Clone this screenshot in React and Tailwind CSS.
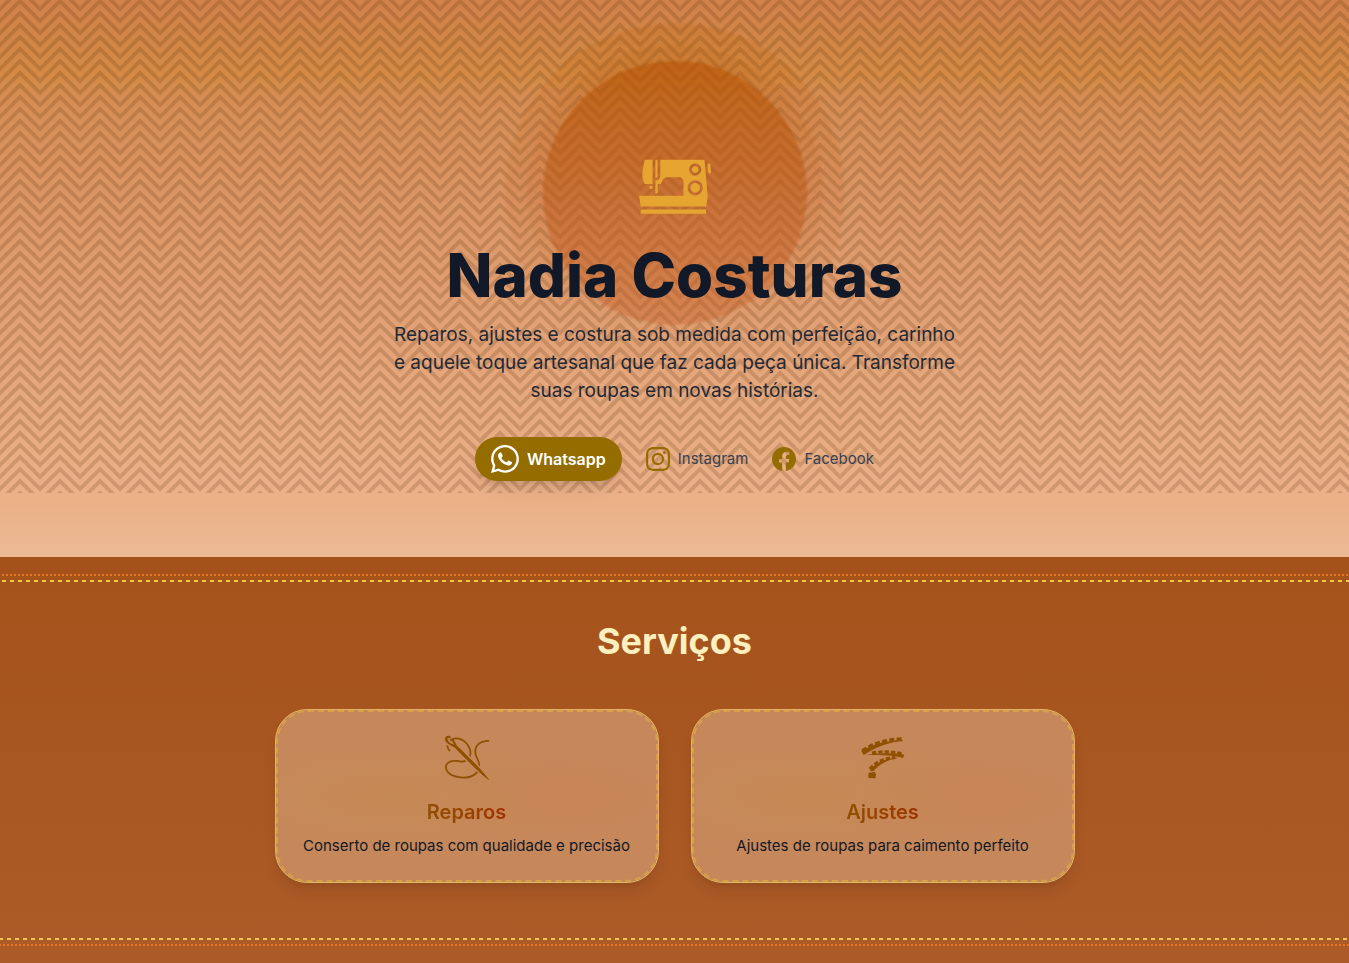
import { GiSewingMachine, GiSewingNeedle } from "react-icons/gi";
import { BsFacebook, BsInstagram, BsWhatsapp } from "react-icons/bs";

function TapeMeasure({ className }) {
  return (
    <svg viewBox="25 27 144 144" className={className} fill="none" stroke="currentColor" aria-hidden="true">
      <path d="M32 77L44 71C75 55 110 47 152 45L159 48C120 51 78 63 39 91Z" fill="currentColor" stroke="none" />
      <path d="M35 77C65 55 105 43 155 41" strokeWidth="9" strokeDasharray="15 7" />
      <path d="M47 90C75 84 120 82 161 89L157 99C122 89 80 90 47 90Z" fill="currentColor" stroke="none" />
      <path d="M64 84C96 78 128 80 158 87" strokeWidth="9" strokeDasharray="13 6" />
      <path d="M146 98C110 103 87 117 68 139L57 137C76 113 102 98 146 98Z" fill="currentColor" stroke="none" />
      <path d="M58 132C75 112 98 101 134 97" strokeWidth="10" strokeDasharray="13 6" />
      <path d="M54 143L72 141L76 148L74 160L53 159Z" fill="currentColor" stroke="none" />
    </svg>
  );
}

function ZigZag() {
  return (
    <svg className="absolute inset-0 size-full text-[#502800]/18" aria-hidden="true">
      <defs>
        <pattern id="zigzag" width="40" height="12" patternUnits="userSpaceOnUse">
          <path
            fill="currentColor"
            d="M0 6.172L6.172 0h5.656L0 11.828V6.172zm40 5.656L28.172 0h5.656L40 6.172v5.656zM6.172 12l12-12h3.656l12 12h-5.656L20 3.828 11.828 12H6.172zm12 0L20 10.172 21.828 12h-3.656z"
          />
        </pattern>
      </defs>
      <rect width="100%" height="100%" fill="url(#zigzag)" />
    </svg>
  );
}

function Halo() {
  return (
    <div className="absolute top-1/2 left-1/2 grid -translate-1/2 place-items-center" aria-hidden="true">
      <div className="col-start-1 row-start-1 size-85 rounded-full bg-linear-to-b from-[#c2640c]/20 via-[#c05a18]/10 to-transparent blur-[1px]" />
      <div className="col-start-1 row-start-1 size-74 rounded-full bg-linear-to-b from-[#b8600c]/15 via-[#c05a18]/10 to-transparent blur-[1px]" />
      <div className="col-start-1 row-start-1 size-66 rounded-full bg-linear-to-b from-[#b45000]/55 via-[#ba5410]/45 to-[#c8602a]/40 blur-[1px]" />
    </div>
  );
}

function StitchTop() {
  return (
    <div className="flex flex-col gap-1 pt-[17px]" aria-hidden="true">
      <div className="h-[2px] bg-[repeating-linear-gradient(to_right,transparent_0_2px,#e8741f_2px_4px)]" />
      <div className="h-[2px] bg-[repeating-linear-gradient(to_right,transparent_0_2px,#ecc94b_2px_6px,transparent_6px_8px)]" />
    </div>
  );
}

function StitchBottom() {
  return (
    <div className="flex flex-col gap-1 pb-[18px]" aria-hidden="true">
      <div className="h-[2px] bg-[repeating-linear-gradient(to_right,#ecc94b_0_3px,transparent_3px_7px,#ecc94b_7px_8px)]" />
      <div className="h-[2px] bg-[repeating-linear-gradient(to_right,#e8741f_0_1px,transparent_1px_3px,#e8741f_3px_4px)]" />
    </div>
  );
}

const services = [
  { title: "Reparos", text: "Conserto de roupas com qualidade e precisão", Icon: GiSewingNeedle },
  { title: "Ajustes", text: "Ajustes de roupas para caimento perfeito", Icon: TapeMeasure },
];

function ServiceCard({ title, text, Icon }) {
  return (
    <article className="relative flex flex-col items-center rounded-4xl border border-[#e0b665] bg-[#c6885b] bg-[radial-gradient(ellipse_at_30%_50%,#c58955_0%,transparent_50%),radial-gradient(ellipse_at_72%_50%,#c88456_0%,transparent_40%)] p-6 text-center shadow-lg">
      <div className="pointer-events-none absolute inset-0 rounded-4xl border-2 border-dashed border-[#d9a048]" />
      <Icon className="mb-4 size-12 text-[#8f5000]" />
      <h3 className="mb-2 bg-linear-to-r from-[#905000] to-[#a03000] bg-clip-text text-xl font-semibold text-transparent">
        {title}
      </h3>
      <p className="text-[15px] leading-6 text-[#111827]">{text}</p>
    </article>
  );
}

export default function App() {
  return (
    <div className="min-h-screen bg-[#ab5a26] font-['Inter',sans-serif]">
      <header className="relative bg-[linear-gradient(to_bottom,#d2824c_0px,#d28746_45px,#d58b46_76px,#d78e55_98px,#db9564_190px,#e2a276_330px,#ecb189_493px,#eab187_500px,#ecb993_557px)] px-4 pb-16">
        <div className="absolute inset-x-0 top-0 bottom-16">
          <ZigZag />
        </div>
        <div className="relative flex flex-col items-center pt-[141px] pb-3 text-center">
          <div className="relative mb-6">
            <div className="absolute inset-x-0 top-6 bottom-0">
              <Halo />
            </div>
            <GiSewingMachine className="relative size-20 text-[#e6a531]" />
          </div>
          <h1 className="relative mb-4 text-6xl font-extrabold text-[#111827]">Nadia Costuras</h1>
          <p className="relative mb-8 max-w-xl text-[19px] leading-7 text-[#1f2937]">
            Reparos, ajustes e costura sob medida com perfeição, carinho e aquele toque artesanal que faz cada peça
            única. Transforme suas roupas em novas histórias.
          </p>
          <nav className="relative flex flex-wrap items-center justify-center gap-6 text-[15px] leading-6 text-[#374151]">
            <a href="#whatsapp" className="flex items-center gap-2 rounded-full bg-[#946c00] px-4 py-2 text-base font-semibold text-white shadow-lg">
              <BsWhatsapp className="size-7" />
              Whatsapp
            </a>
            <a href="#instagram" className="flex items-center gap-2">
              <BsInstagram className="size-6 text-[#946c00]" />
              Instagram
            </a>
            <a href="#facebook" className="flex items-center gap-2">
              <BsFacebook className="size-6 text-[#946c00]" />
              Facebook
            </a>
          </nav>
        </div>
      </header>
      <section className="bg-linear-to-b from-[#a5521a] to-[#ac5b28]">
        <StitchTop />
        <div className="mx-auto max-w-4xl px-12 pt-[39px] pb-[55px]">
          <h2 className="mb-12 text-center text-4xl font-bold text-[#fdf0c0]">Serviços</h2>
          <div className="grid gap-8 md:grid-cols-2">
            {services.map((service) => (
              <ServiceCard key={service.title} {...service} />
            ))}
          </div>
        </div>
        <StitchBottom />
      </section>
    </div>
  );
}
